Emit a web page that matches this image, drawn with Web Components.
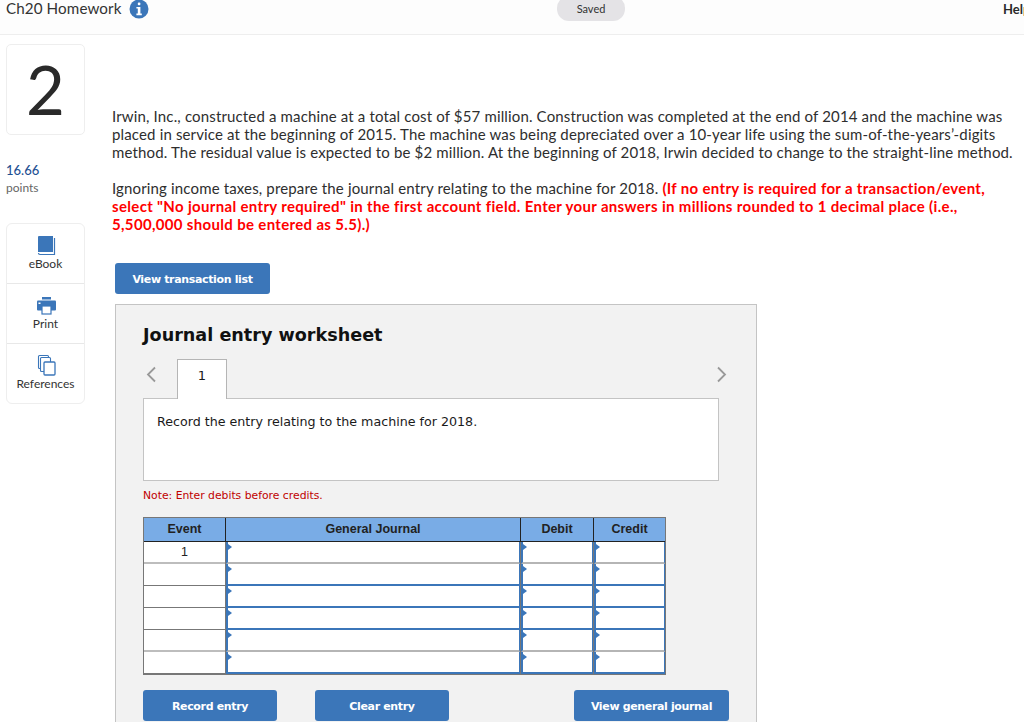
<!DOCTYPE html>
<html lang="en"><head><meta charset="utf-8"><title>Ch20 Homework</title>
<style>
html,body{margin:0;padding:0;background:#fff;height:722px;overflow:hidden}
body{font-family:"Lato","Open Sans",sans-serif;color:#2a2a2a}
</style></head><body>
<x-app>
  <x-topbar slot="top" title-text="Ch20 Homework"></x-topbar>
  <x-rail slot="rail"></x-rail>
  <x-question slot="main">
    <x-worksheet></x-worksheet>
  </x-question>
</x-app>
<script>
function def(name, html, init){
  customElements.define(name, class extends HTMLElement{
    connectedCallback(){
      if(this.shadowRoot) return;
      const r=this.attachShadow({mode:'open'});
      r.innerHTML=html;
      if(init) init.call(this,r);
    }
  });
}
def('x-app',`<style>
:host{display:block;width:1024px;height:722px;overflow:hidden}
.body{display:flex;align-items:flex-start}
.rail{flex:0 0 112px}
.main{flex:1;min-width:0}
</style><slot name="top"></slot><div class="body"><div class="rail"><slot name="rail"></slot></div><div class="main"><slot name="main"></slot></div></div>`);

def('x-topbar',`<style>
:host{display:flex;align-items:flex-start;height:34px;border-bottom:1px solid #eeeeee;background:#fdfdfd;position:relative;overflow:hidden}
.t{font:400 15.2px/16px "Lato",sans-serif;color:#333;margin:0 0 0 6px;letter-spacing:.1px}
svg{margin:-1px 0 0 7px;display:block}
.saved{position:absolute;left:557px;top:-4px;width:68px;height:25px;border-radius:12px;background:#e4e3e6;font:400 11px/25px "Lato",sans-serif;text-align:center;color:#333}
.help{position:absolute;left:1003px;top:0;font:700 13px/18px "Lato",sans-serif;color:#2a2a2a}
</style><div class="t">Ch20 Homework</div>
<svg width="20" height="20" viewBox="0 0 20 20"><circle cx="10" cy="10" r="9.5" fill="#3b76b9"/><rect x="8.8" y="3.6" width="2.6" height="2.6" rx="1" fill="#fff"/><path d="M7.4 8h4v6.6h1.4v1.6H7.4v-1.6h1.4V9.6H7.4z" fill="#fff"/></svg>
<div class="saved">Saved</div><div class="help">Help</div>`);

def('x-rail',`<style>
:host{display:block;padding:9px 27px 0 6px;font-family:"Lato",sans-serif}
.num{box-sizing:border-box;height:91px;border:1px solid #eeeeee;border-radius:5px;font:400 67px/89px "Lato",sans-serif;text-align:center;color:#2a2a2a}
.pts{margin-top:26px;font:500 13px/18px "Lato",sans-serif;color:#1f5193}
.lbl{font:400 12px/18px "Lato",sans-serif;color:#666;margin-top:0}
.tools{margin-top:26px;box-sizing:border-box;height:181px;border:1px solid #eeeeee;border-radius:6px;display:flex;flex-direction:column}
.tool{flex:1;display:flex;flex-direction:column;align-items:center;justify-content:flex-start;padding-top:10px;font:400 12px/14px "Lato",sans-serif;color:#333;border-bottom:1px solid #e8e8e8;gap:1px}
.tool:last-child{border-bottom:0}
svg{display:block;height:22px}
</style>
<div class="num">2</div>
<div class="pts">16.66</div><div class="lbl">points</div>
<div class="tools">
<div class="tool"><svg width="20" height="22" viewBox="0 0 20 22"><path d="M2 18V3q0-1 1-1h14v16H3.500q-1.500 0-1.500 0z" fill="#3b76b9"/><path d="M2.500 19q0 1.500 1.500 1.500H18.500V4" fill="none" stroke="#3b76b9" stroke-width="1.200"/></svg>eBook</div>
<div class="tool"><svg width="20" height="22" viewBox="0 0 20 22"><rect x="6" y="3" width="9" height="2.500" fill="#3b76b9"/><rect x="1" y="6.500" width="19" height="10" rx="1" fill="#3b76b9"/><rect x="2.500" y="8.500" width="2" height="1.500" fill="#fff"/><rect x="6" y="12" width="9" height="8" fill="#fff" stroke="#3b76b9" stroke-width="1.200"/></svg>Print</div>
<div class="tool"><svg width="20" height="22" viewBox="0 0 20 22"><rect x="2.500" y="1.500" width="10" height="13" rx="1" fill="#fff" stroke="#3b76b9" stroke-width="1.100"/><rect x="4.500" y="3.500" width="10" height="14" rx="1" fill="#fff" stroke="#3b76b9" stroke-width="1.100"/><rect x="8" y="8" width="11" height="13" rx="1" fill="#fff" stroke="#3b76b9" stroke-width="1.300"/></svg>References</div>
</div>`);

def('x-question',`<style>
:host{display:block;padding-top:72px;font:400 15px/18px "Lato",sans-serif;color:#2e2e2e;width:912px}
p{margin:0;width:908px;letter-spacing:.15px}
.q2{margin-top:18px;width:890px}
b{color:#f00;font-weight:700;letter-spacing:.33px}
.act{margin:30px 0 10px 3px}
</style>
<p>Irwin, Inc., constructed a machine at a total cost of $57 million. Construction was completed at the end of 2014 and the machine was placed in service at the beginning of 2015. The machine was being depreciated over a 10-year life using the sum-of-the-years’-digits method. The residual value is expected to be $2 million. At the beginning of 2018, Irwin decided to change to the straight-line method.</p>
<p class="q2">Ignoring income taxes, prepare the journal entry relating to the machine for 2018. <b>(If no entry is required for a transaction/event, select "No journal entry required" in the first account field. Enter your answers in millions rounded to 1 decimal place (i.e., 5,500,000 should be entered as 5.5).)</b></p>
<div class="act"><x-btn w="155">View transaction list</x-btn></div>
<slot></slot>`);

def('x-btn',`<style>
:host{display:inline-block}
button{display:block;box-sizing:border-box;height:31px;border:0;border-radius:3px;background:#3b76b9;color:#fff;font:700 11px/29px "DejaVu Sans",Verdana,sans-serif;padding:2px 0 0;text-align:center;letter-spacing:-.35px}
</style><button><slot></slot></button>`,function(r){r.querySelector('button').style.width=this.getAttribute('w')+'px'});

def('x-worksheet',`<style>
:host{display:block;box-sizing:border-box;margin-left:3px;width:642px;height:440px;background:#f2f2f2;border:1px solid #c4c4c4;padding:19px 27px 0;font-family:"DejaVu Sans",Verdana,sans-serif;color:#1a1a1a}
h2{margin:0;font:700 17.6px/22px "DejaVu Sans",Verdana,sans-serif;color:#111}
.tabs{display:flex;align-items:flex-end;height:40px;margin-top:12px;width:576px;justify-content:space-between;position:relative;z-index:1}
.left{display:flex;align-items:flex-end;gap:20px;padding-left:3px}
.tab{box-sizing:border-box;width:50px;height:40px;background:#fff;border:1px solid #b5b5b5;border-bottom:0;font:400 13px/31px "DejaVu Sans",sans-serif;text-align:center;margin-bottom:-1px}
svg{display:block;margin-bottom:15px}
.box{box-sizing:border-box;width:576px;height:83px;background:#fff;border:1px solid #c4c4c4;padding:15px 13px 0;font:400 12.66px/16px "DejaVu Sans",sans-serif}
.note{color:#c00000;font:400 10.8px/14px "DejaVu Sans",sans-serif;margin-top:8px}
x-journal{margin-top:14px}
.btns{display:flex;margin-top:15px;width:586px;justify-content:space-between}
.g{display:flex;gap:38px}
</style>
<h2>Journal entry worksheet</h2>
<div class="tabs"><div class="left"><svg width="11" height="17" viewBox="0 0 11 17"><path d="M9 1.500 2 8.500l7 7" fill="none" stroke="#999" stroke-width="1.800"/></svg><div class="tab">1</div></div><svg width="11" height="17" viewBox="0 0 11 17" style="margin-right:-8px"><path d="M2 1.500l7 7-7 7" fill="none" stroke="#999" stroke-width="1.800"/></svg></div>
<div class="box" style="position:relative">Record the entry relating to the machine for 2018.</div>
<div class="note">Note: Enter debits before credits.</div>
<x-journal></x-journal>
<div class="btns"><div class="g"><x-btn w="134">Record entry</x-btn><x-btn w="134">Clear entry</x-btn></div><x-btn w="155">View general journal</x-btn></div>`);

def('x-journal',`<style>
:host{display:block;width:523px;box-sizing:border-box;border:1px solid #777;font:700 12.500px/23px "Liberation Sans",Arial,sans-serif;color:#222}
.g{display:grid;grid-template-columns:81px 1px 294px 1px 72px 1px 71px;grid-auto-rows:auto;background:#777}
.h{background:#79ace6;height:23px;text-align:center;border-bottom:1px solid #222}
.s{background:#222;height:24px}
.sp{background:#777}
.e{background:#fff;height:21px;border-bottom:1px solid #777;font:400 12.500px/21px "Liberation Sans",Arial,sans-serif;text-align:center}
.e.g2{border-bottom:2px solid #bdbdbd;height:20px}
.c{box-sizing:border-box;background:#fff;height:22px;border-left:2px solid #3b76b9;border-right:1px solid #3b76b9;border-bottom:2px solid #3b76b9;position:relative}
.c.g2{border-bottom-color:#b5b5b5}
.c::before{content:"";position:absolute;left:0;top:2px;border-left:4px solid #3b76b9;border-top:3.500px solid transparent;border-bottom:3.500px solid transparent}
</style><div class="g" id="g"></div>`,function(r){
  const g=r.getElementById('g');let h='';
  ['Event','General Journal','Debit','Credit'].forEach((t,i)=>{h+=`<div class="h">${t}</div>`+(i<3?'<div class="s"></div>':'')});
  for(let i=0;i<6;i++){
    const m=(i==0||i==4)?' g2':'';
    h+=`<div class="e${m}">${i==0?'1':''}</div><div class="sp"></div><div class="c${m}"></div><div class="sp"></div><div class="c${m}"></div><div class="sp"></div><div class="c${m}"></div>`;
  }
  g.innerHTML=h;
});
</script>
</body></html>
